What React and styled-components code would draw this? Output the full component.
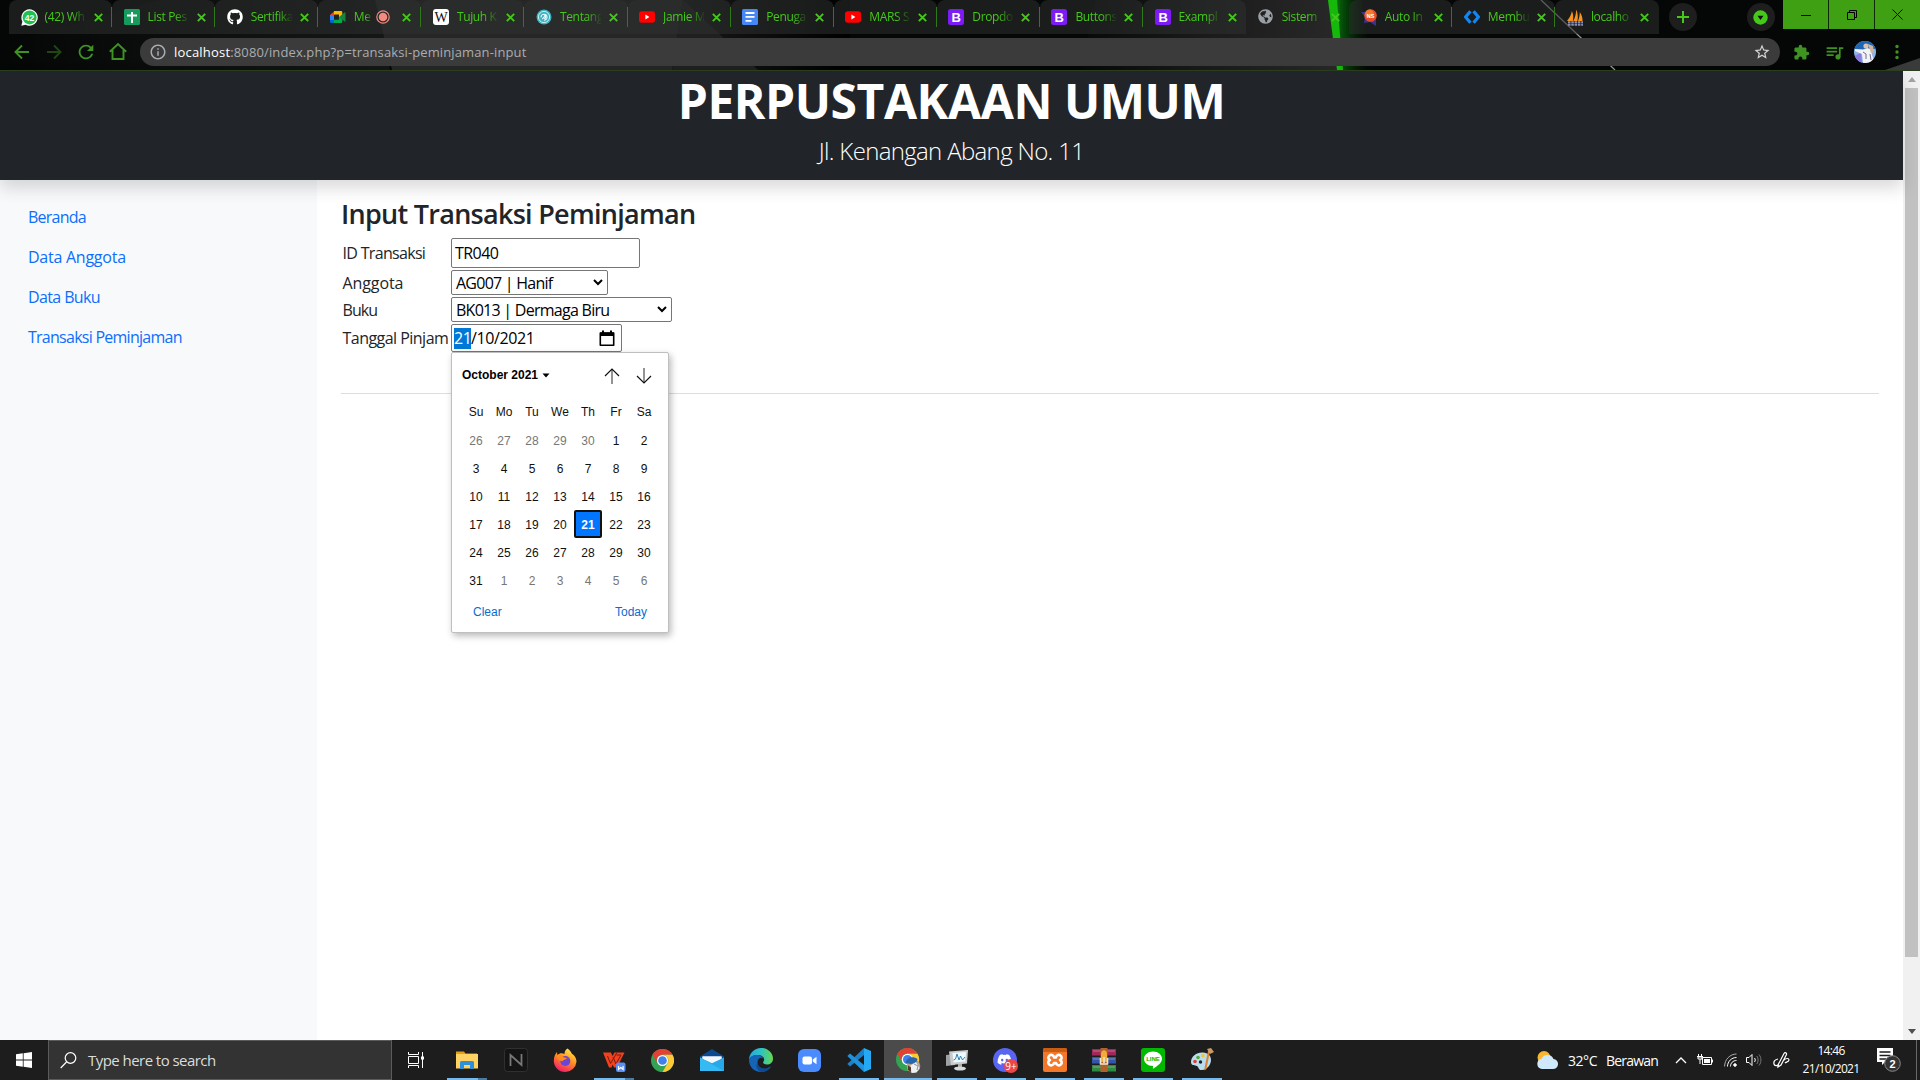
import React from 'react';
import styled, { createGlobalStyle, css } from 'styled-components';
import { FaGithub, FaDiscord, FaGlobeAmericas } from 'react-icons/fa';
import { MdQueueMusic, MdStarBorder, MdInfoOutline, MdRefresh, MdExtension } from 'react-icons/md';

const sans = '"Segoe UI", "Open Sans", "Noto Sans", sans-serif';
const arial = '"Liberation Sans", Arial, sans-serif';
const green = '#45c81a';
const darkGreen = '#3f9322';

const GlobalStyle = createGlobalStyle`
  * { box-sizing: border-box; }
  body { margin: 0; background: #fff; overflow: hidden; }
  svg { display: block; flex: none; }
`;

const Screen = styled.div`
  width: 1920px;
  height: 1080px;
  display: flex;
  flex-direction: column;
  overflow: hidden;
  font-family: ${sans};
`;

/* ---------- Browser frame ---------- */
const Frame = styled.header`
  position: relative;
  height: 71px;
  flex: none;
  display: flex;
  flex-direction: column;
  background: #050606;
  border-bottom: 1px solid #2b401f;
`;
const FrameArt = styled.svg`
  position: absolute;
  inset: 0;
`;
const TabStrip = styled.div`
  position: relative;
  height: 34px;
  display: flex;
  padding-left: 9px;
`;
const Tab = styled.div`
  width: 103.1px;
  height: 34px;
  display: flex;
  align-items: center;
  padding-left: 11.5px;
  border-radius: 8px 8px 0 0;
  background: ${p => (p.$active ? 'transparent' : 'rgba(46, 48, 47, 0.55)')};
`;
const TabIcon = styled.span`
  width: 16px;
  height: 16px;
  margin-right: 8px;
  display: flex;
`;
const TabTitle = styled.span`
  width: 41px;
  white-space: nowrap;
  font-size: 12px;
  line-height: 18px;
  letter-spacing: -0.35px;
  color: ${green};
  mask-image: linear-gradient(90deg, #000 65%, rgba(0, 0, 0, 0.1) 100%);
  ${p => p.$short && css`width: 18px; margin-right: 4px;`}
`;
const RecDot = styled.svg`
  margin-right: 5px;
`;
const TabClose = styled.svg`
  margin-left: ${p => (p.$short ? 7 : 8)}px;
`;
const Divider = styled.span`
  width: 1px;
  height: 20px;
  margin-left: auto;
  background: ${p => (p.$hidden ? 'transparent' : '#2f7a17')};
`;
const RoundButton = styled.span`
  width: 28px;
  height: 28px;
  margin: 3px 0 0 ${p => p.$left}px;
  border-radius: 50%;
  background: #1d1e1d;
  display: flex;
  align-items: center;
  justify-content: center;
`;
const WindowButtons = styled.div`
  margin-left: auto;
  height: 29px;
  display: flex;
  gap: 1px;
  background: #0d2a04;
`;
const WindowButton = styled.span`
  width: 45px;
  display: flex;
  align-items: center;
  justify-content: center;
  background: #40a013;
`;
const Toolbar = styled.div`
  position: relative;
  height: 36px;
  display: flex;
  align-items: center;
  padding-left: 11px;
  color: ${darkGreen};
`;
const NavIcons = styled.div`
  display: flex;
  gap: 10px;
  width: 129px;
`;
const Omnibox = styled.div`
  width: 1640px;
  height: 28px;
  border-radius: 14px;
  background: #3b3b3b;
  display: flex;
  align-items: center;
  padding: 0 9px;
  font-size: 13px;
  letter-spacing: 0.12px;
  color: #a9adb1;
  white-space: nowrap;
`;
const Host = styled.span`
  margin-left: 7px;
  letter-spacing: 0.2px;
  color: #fff;
`;
const OmniEnd = styled.span`
  margin-left: auto;
  color: #d2d5d8;
`;
const Extensions = styled.div`
  display: flex;
  align-items: center;
  padding-left: 13px;
  & > :nth-child(2) { margin-left: 14px; }
  & > :nth-child(3) { margin-left: 9px; }
  & > :nth-child(4) { margin-left: 11px; }
`;

/* ---------- Web page ---------- */
const Viewport = styled.div`
  height: 969px;
  flex: none;
  display: flex;
`;
const Page = styled.div`
  width: 1903px;
  display: flex;
  flex-direction: column;
`;
const Banner = styled.div`
  position: relative;
  z-index: 1;
  height: 109px;
  flex: none;
  padding-top: 1px;
  text-align: center;
  background: #212529;
  color: #fff;
  box-shadow: 0 8px 16px rgba(0, 0, 0, 0.15);
`;
const BannerTitle = styled.h1`
  margin: 0;
  font-size: 48px;
  line-height: 58px;
  font-weight: 700;
  letter-spacing: -0.45px;
`;
const BannerLead = styled.p`
  margin: 3px 0 0;
  font-size: 24px;
  line-height: 36px;
  font-weight: 300;
  letter-spacing: -0.66px;
`;
const Columns = styled.div`
  flex: 1;
  display: flex;
`;
const Sidebar = styled.nav`
  width: 317px;
  flex: none;
  padding: 17px 28px;
  background: #f8f9fa;
  display: flex;
  flex-direction: column;
`;
const SideLink = styled.a`
  padding: 8px 0;
  font-size: 16px;
  line-height: 24px;
  letter-spacing: ${p => p.$ls}px;
  color: #0d6efd;
`;
const Main = styled.main`
  flex: 1;
  padding: 17px 24px 0;
`;
const Heading = styled.h3`
  margin: 0 0 7px;
  font-size: 27px;
  line-height: 34px;
  font-weight: 600;
  letter-spacing: -0.72px;
  color: #212529;
`;
const Form = styled.div`
  display: grid;
  grid-template-columns: 109px 1fr;
  grid-template-rows: 30px 25px 25px 28px;
  row-gap: 2px;
  padding-left: 1px;
  align-items: center;
`;
const Label = styled.label`
  padding-left: 0.5px;
  font-size: 16px;
  letter-spacing: ${p => p.$ls}px;
  white-space: nowrap;
  color: #212529;
`;
const Field = styled.div`
  position: relative;
  width: ${p => p.$w}px;
  height: 100%;
  display: flex;
  align-items: center;
  justify-content: space-between;
  padding: 0 4px 0 ${p => p.$pad || 4}px;
  border: 1px solid #767676;
  border-radius: 2px;
  background: #fff;
  font-size: 16px;
  letter-spacing: ${p => p.$ls || -0.7}px;
  white-space: nowrap;
  color: #000;
`;
const DatePart = styled.span`
  display: inline-block;
  width: 17px;
  height: 21px;
  line-height: 21px;
  background: #0078d7;
  color: #fff;
`;
const DateValue = styled.span`
  line-height: 21px;
  letter-spacing: -0.4px;
`;
const Rule = styled.hr`
  height: 1px;
  margin: 41px 0 0;
  border: 0;
  background: #dcddde;
`;

/* ---------- Date picker ---------- */
const Picker = styled.div`
  position: absolute;
  left: -1px;
  top: 27px;
  z-index: 2;
  width: 218px;
  height: 281px;
  border: 1px solid #bfbfbf;
  border-radius: 2px;
  background: #fff;
  box-shadow: 2px 3px 7px rgba(0, 0, 0, 0.28);
  font-family: ${arial};
  font-size: 12px;
  letter-spacing: 0;
  color: #101010;
`;
const PickerHead = styled.div`
  height: 44px;
  display: flex;
  align-items: center;
  padding: 0 16px 0 10px;
  font-weight: 700;
  color: #000;
  & > svg:nth-of-type(1) { margin-left: 4px; }
  & > svg:nth-of-type(2) { margin: 2px 16px 0 auto; }
  & > svg:nth-of-type(3) { margin-top: 2px; }
`;
const DayGrid = styled.div`
  display: grid;
  grid-template-columns: repeat(7, 28px);
  grid-template-rows: 29px repeat(6, 28px);
  padding-left: 10px;
`;
const Weekday = styled.span`
  display: flex;
  align-items: center;
  justify-content: center;
`;
const Day = styled(Weekday)`
  padding-top: 2px;
  color: ${p => (p.$muted ? '#767676' : '#101010')};
  ${p => p.$selected && css`
    border: 2px solid #101010;
    border-radius: 2px;
    background: #0075ff;
    color: #fff;
    font-weight: 700;
  `}
`;
const PickerFoot = styled.div`
  display: flex;
  justify-content: space-between;
  padding: 11px 21px 0 21px;
  line-height: 15px;
  color: #0b6bd0;
`;

/* ---------- Scrollbar ---------- */
const Scrollbar = styled.div`
  width: 17px;
  display: flex;
  flex-direction: column;
  align-items: center;
  justify-content: space-between;
  background: #f1f1f1;
`;
const ScrollArrow = styled.span`
  height: 17px;
  display: flex;
  align-items: center;
`;
const Thumb = styled.span`
  width: 13px;
  height: 869px;
  margin-bottom: auto;
  background: #c1c1c1;
`;

/* ---------- Taskbar ---------- */
const Taskbar = styled.footer`
  height: 40px;
  flex: none;
  display: flex;
  background: #1d1d1d;
  color: #fff;
`;
const StartButton = styled.span`
  width: 48px;
  display: flex;
  align-items: center;
  justify-content: center;
`;
const SearchBox = styled.div`
  width: 344px;
  border: 1px solid #5b5b5b;
  background: #333;
  display: flex;
  align-items: center;
  padding-left: 11px;
  gap: 11px;
  font-size: 15px;
  letter-spacing: -0.55px;
  color: #dcdcdc;
`;
const TaskView = styled.span`
  width: 50px;
  padding-right: 2px;
  display: flex;
  align-items: center;
  justify-content: center;
`;
const AppButton = styled.span`
  position: relative;
  width: 49px;
  height: 40px;
  display: flex;
  align-items: center;
  justify-content: center;
  background: linear-gradient(90deg, transparent 1px, ${p => (p.$active ? '#4b4b4b' : 'transparent')} 1px);
  &::after {
    content: '';
    position: absolute;
    bottom: 0;
    left: ${p => (p.$active ? 1 : 5)}px;
    right: ${p => (p.$active ? 0 : 4)}px;
    height: 2px;
    background: ${p => (p.$running
      ? p.$stacked ? 'linear-gradient(90deg, #76b9ed 31px, #4a7ba1 31px)' : '#76b9ed'
      : 'transparent')};
  }
`;
const Tray = styled.div`
  margin-left: auto;
  width: 384px;
  display: flex;
  align-items: center;
  white-space: nowrap;
  font-size: 14px;
`;
const TrayText = styled.span`
  margin-left: ${p => p.$left}px;
  width: ${p => p.$w}px;
  letter-spacing: ${p => p.$ls}px;
`;
const TrayIcon = styled.span`
  margin-left: ${p => p.$left}px;
`;
const Clock = styled.div`
  margin-left: 11px;
  width: 60px;
  text-align: center;
  font-size: 12px;
  line-height: 18px;
  letter-spacing: -0.67px;
`;
const ShowDesktop = styled.span`
  width: 4px;
  height: 40px;
  margin-left: auto;
  border-left: 1px solid #6a6a6a;
`;

/* ---------- Icons ---------- */
const SvgText = styled.text`
  font-family: ${arial};
  font-weight: 700;
  text-anchor: middle;
`;
const WhatsApp = () => (
  <svg width="17" height="17" viewBox="0 0 17 17">
    <path d="M8.5.3a8.2 8.2 0 1 1-3.9 15.4L.3 16.7l1.1-4.2A8.2 8.2 0 0 1 8.5.3z" fill="#fff" />
    <circle cx="8.6" cy="8.4" r="7" fill="#1fc24f" />
    <SvgText x="8.5" y="11.5" fontSize="8.5" fill="#fff">42</SvgText>
  </svg>
);
const Sheets = () => (
  <svg width="16" height="16"><rect width="16" height="16" rx="1.5" fill="#159b5c" /><path d="M8 3v11M3 6.5h10" stroke="#fff" strokeWidth="2" /></svg>
);
const Meet = () => (
  <svg width="16" height="16" viewBox="0 0 16 16">
    <path d="M0 6l4.5-4v4z" fill="#ea4335" /><path d="M0 6h4v5H0z" fill="#2684fc" /><path d="M0 11h4v3H1.2A1.2 1.2 0 0 1 0 12.8z" fill="#0066da" />
    <path d="M4 2h7a1.3 1.3 0 0 1 1.3 1.3V8L9 8V5.5H4z" fill="#ffba00" /><path d="M4 10.8h5V8l3.3.2v4.5A1.3 1.3 0 0 1 11 14H4z" fill="#00ac47" />
    <path d="M9 8l5.5-4.6c.5-.4 1-.2 1 .4v8.5c0 .6-.5.7-1 .3z" fill="#16843b" />
  </svg>
);
const Wiki = () => (
  <svg width="16" height="16"><rect width="16" height="16" rx="3" fill="#fff" /><text x="8" y="13" fontSize="14" textAnchor="middle" fontFamily="Liberation Serif, serif" fill="#111">W</text></svg>
);
const Tentang = () => (
  <svg width="16" height="16"><circle cx="8" cy="8" r="7.5" fill="#3fb2c2" /><circle cx="8" cy="8" r="5.6" fill="none" stroke="#c6eef2" /><path d="M5 8.3a3 3 0 1 1 3 3M6.2 10.2l4-4.4M8 6.6a1.6 1.6 0 0 1 0 3.2" fill="none" stroke="#e8fbfd" strokeWidth="1.1" /></svg>
);
const Youtube = () => (
  <svg width="16" height="16"><rect y="2.2" width="16" height="11.6" rx="2.8" fill="#f00" /><path d="M6.4 5.6v4.8l4-2.4z" fill="#fff" /></svg>
);
const Docs = () => (
  <svg width="16" height="16"><rect width="16" height="16" rx="1.5" fill="#4587f4" /><path d="M3.5 4h9M3.5 7.8h9M3.5 11.8h6" stroke="#fff" strokeWidth="1.8" /></svg>
);
const Bootstrap = () => (
  <svg width="16" height="16"><rect width="16" height="16" rx="2.5" fill="#7d1bf5" /><SvgText x="8.1" y="12.6" fontSize="13" fill="#fff">B</SvgText></svg>
);
const AutoIn = () => (
  <svg width="17" height="17" viewBox="0 0 17 17"><path d="M0 3l5 0 9 1 1 6 0 7-6-4-6 1 1-6z" fill="#39358c" /><circle cx="9.5" cy="6.5" r="6.3" fill="#ef4a2b" /><circle cx="8.5" cy="4.8" r="4.3" fill="#fb8a2c" opacity=".75" /><SvgText x="9.5" y="8.500" fontSize="5.5" fill="#fff">NS</SvgText></svg>
);
const Membu = () => (
  <svg width="16" height="16" viewBox="0 0 16 16"><path d="M6.4 2.2L1.6 8l4.8 5.8M9.6 2.2L14.4 8l-4.8 5.8" fill="none" stroke="#1187f5" strokeWidth="3.2" strokeLinejoin="round" /></svg>
);
const PhpMyAdmin = () => (
  <svg width="17" height="17" viewBox="0 0 17 17"><path d="M0 12C3 8 4.500 5 4.800 2c1.600 3 1.800 6 1 10zM6.200 12c2-3 2.800-7 3-11.500 1.800 4 2 8 1.200 11.500zM11 12c1.300-3 1.700-6 1.800-9 2 3 3 6 2.700 9z" fill="#f6921e" /><path d="M1 13.200h15M1 15.800h15" stroke="#8c8fb5" strokeWidth="2" strokeDasharray="2.500 .8" /></svg>
);
const iconFor = {
  wa: <WhatsApp />, sheets: <Sheets />, github: <FaGithub size={16} color="#fff" />, meet: <Meet />, wiki: <Wiki />,
  tentang: <Tentang />, yt: <Youtube />, docs: <Docs />, bs: <Bootstrap />, globe: <FaGlobeAmericas size={15} color="#9aa0a6" />,
  auto: <AutoIn />, membu: <Membu />, pma: <PhpMyAdmin />,
};

const ChromeLogo = () => (
  <svg width="23" height="23" viewBox="0 0 24 24">
    <circle cx="12" cy="12" r="12" fill="#33a352" />
    <path d="M1.600 6A12 12 0 0 1 22.400 6H12a6 6 0 0 0-5.200 9z" fill="#e34133" />
    <path d="M22.400 6A12 12 0 0 1 12 24l5.200-9A6 6 0 0 0 12 6z" fill="#fdc934" />
    <circle cx="12" cy="12" r="5.800" fill="#fff" /><circle cx="12" cy="12" r="4.500" fill="#3f7fee" />
  </svg>
);
const ChromeProfile = () => (
  <svg width="26" height="26" viewBox="-1 -1 26 26">
    <circle cx="11.500" cy="11.500" r="11.500" fill="#33a352" />
    <path d="M1.500 5.700A11.500 11.500 0 0 1 21.500 5.700H11.500a6 6 0 0 0-5.200 9z" fill="#e34133" />
    <path d="M21.500 5.700A11.500 11.500 0 0 1 11.500 23l5.200-9A6 6 0 0 0 11.500 5.700z" fill="#fdc934" />
    <circle cx="11.500" cy="11.500" r="5.800" fill="#fff" /><circle cx="11.500" cy="11.500" r="4.500" fill="#3f7fee" />
    <circle cx="17.500" cy="18" r="6.800" fill="#b5a187" /><path d="M9.500 15c1-6 8-7 12-4l-1.500 4-5 1z" fill="#2765ad" />
    <path d="M14.500 17.500l5.500-3.500 3.500 6-3 4.500-5 .5z" fill="#eef1f4" /><path d="M12 17.500l3 2v4.500l-3-2z" fill="#4b3b36" /><path d="M18 16l4 2-1 4" fill="none" stroke="#8c8f9c" />
  </svg>
);
const Explorer = () => (
  <svg width="24" height="24" viewBox="0 0 24 24"><path d="M1 3.500h8l1.500 2H22V20H1z" fill="#e5a014" /><path d="M1 6h22v14.500H1z" fill="#ffd363" /><path d="M5 21v-6.500A1.500 1.500 0 0 1 6.500 13h11a1.500 1.500 0 0 1 1.500 1.500V21h-4v-4H9v4z" fill="#2f8fd9" /></svg>
);
const NIcon = () => (
  <svg width="24" height="24" viewBox="0 0 24 24"><rect x=".5" y=".5" width="23" height="23" rx="3" fill="#141414" stroke="#303030" /><path d="M6.500 18V7l11 10V6" fill="none" stroke="#777" strokeWidth="1.800" /></svg>
);
const Firefox = () => (
  <svg width="24" height="24" viewBox="0 0 24 24">
    <defs><linearGradient id="ff" x1=".8" y1="0" x2=".3" y2="1"><stop offset="0" stopColor="#fff14a" /><stop offset=".45" stopColor="#ff9322" /><stop offset="1" stopColor="#f2196a" /></linearGradient></defs>
    <path d="M14.500.5c3 2 3.800 4 4.500 5.500 2 .5 4.500 4 4.500 7.500A11.300 11.300 0 0 1 12 24 11.300 11.300 0 0 1 .8 12.700C.8 8.500 2.500 6 4 4l.3 3C7 4.500 9.500 5 11.500 6c0-2.500 1-4.500 3-5.500z" fill="url(#ff)" />
    <circle cx="12.300" cy="13" r="5" fill="#6b45d6" /><path d="M3 8c3-2.500 6-1 8 1.500l3 .5c-1 2-4 1.500-4.500 3.500-3-.5-5-2.500-6.500-5.500z" fill="#ff8a1d" />
  </svg>
);
const Wps = () => (
  <svg width="24" height="24" viewBox="0 0 24 24"><path d="M1 4.500H9L10.500 8 12.500 4.500H22.500L15 19.500H12L10.500 16.500 9.500 19.500H7z" fill="#f1411f" /><path d="M5.500 8l3 7.500 6.500-11M11 9l3 7 5-9h-4.500" fill="none" stroke="#7c1a0d" strokeWidth="1" /><rect x="14" y="14.500" width="9.500" height="9.500" rx="2" fill="#5a8ff5" /><path d="M16.500 18v3.500l2.300-2 2.300 2V18" fill="none" stroke="#fff" strokeWidth="1.200" /></svg>
);
const Mail = () => (
  <svg width="24" height="24" viewBox="0 0 24 24"><path d="M0 8.500L12 1l12 7.500V11H0z" fill="#0b4a8f" /><path d="M2.500 8.500h19V11L12 17 2.500 11z" fill="#f5f8fb" /><path d="M0 9.500l12 5.500L24 9.500V23H0z" fill="#26a9ea" /><path d="M0 9.500L24 23H0z" fill="#3cc2f6" opacity=".7" /><path d="M2.500 8.500h19v2.100L12 15l-9.500-4.400z" fill="#f5f8fb" /></svg>
);
const Edge = () => (
  <svg width="24" height="24" viewBox="0 0 24 24">
    <defs><linearGradient id="eg"><stop offset="0" stopColor="#27a8e0" /><stop offset=".5" stopColor="#2fc2c4" /><stop offset="1" stopColor="#66d84f" /></linearGradient></defs>
    <path d="M0 12C0 5 5.500 0 12 0c7 0 12 5 12 10.500 0 4-3 6-6 6-3.500 0-4.500-1.500-3.500-3 2-3-1-6.500-5.500-6.500S1 9 0 12z" fill="url(#eg)" />
    <path d="M0 12c1-4 5-5.500 9-5 3 .4 5 2 5.500 4-2-2.500-6-1-6 3.500 0 4 4 7 9 6 1.700-.4 3-1.300 4.500-2C20 22 16 24 12 24 5 24 0 18.500 0 12z" fill="#1564b8" />
    <path d="M8.500 14.500c0 4 4 7 9 6 1.700-.4 3-1.300 4.500-2C19.500 22 16 24 12.500 24 8 22.500 6 18 8.500 14.500z" fill="#0d4a94" />
  </svg>
);
const Zoom = () => (
  <svg width="23" height="23" viewBox="0 0 23 23"><rect width="23" height="23" rx="6" fill="#4a8cff" /><rect x="4.500" y="7.500" width="9.500" height="8" rx="2" fill="#fff" /><path d="M14.800 10.500l3.700-2.700v7.400l-3.700-2.700z" fill="#fff" /></svg>
);
const VsCode = () => (
  <svg width="24" height="24" viewBox="0 0 24 24"><path d="M17 0v7L3 18.500 .3 16z" fill="#1b80c9" /><path d="M17 24v-7L3 5.500 .3 8z" fill="#2092dc" /><path d="M17 0l7 3v18l-7 3z" fill="#24a9f2" /></svg>
);
const TaskMon = () => (
  <svg width="24" height="24" viewBox="0 0 24 24"><path d="M1 7l9-1v11l-9 1z" fill="#9da1a3" /><path d="M4 3.500L23 2l-1 13.500L6 17z" fill="#c9cccd" /><path d="M7.500 5l13.500-1-.8 9.500L8.500 14.500z" fill="#eef8fd" /><path d="M8.500 12l2-1 1.500-5 2 6 1.500-4 2 4 2.500-3" fill="none" stroke="#2987bd" /><path d="M13 16h4v4h-4z" fill="#aaaeb0" /><ellipse cx="15" cy="20.500" rx="6" ry="2" fill="#d6d9da" /></svg>
);
const Discord = () => (
  <svg width="25" height="25" viewBox="0 0 25 25"><circle cx="12" cy="12" r="12" fill="#5865f2" /><FaDiscord x="4" y="4" size={15} color="#fff" /><circle cx="18" cy="18" r="7" fill="#ee4548" /><text x="18" y="21.600" fontSize="10" textAnchor="middle" fontFamily="Open Sans, sans-serif" fill="#fff">9+</text></svg>
);
const Xampp = () => (
  <svg width="24" height="24" viewBox="0 0 24 24"><rect width="24" height="24" rx="2" fill="#f3782a" /><path d="M0 2a2 2 0 0 1 2-2h20a2 2 0 0 1 2 2v2H0z" fill="#ca5c14" /><path d="M6 8a2.800 2.800 0 0 1 5 1.500h2A2.800 2.800 0 0 1 18 8c1.500 2 .2 3.500-1 4 1.500.8 2.500 2.500 1 4.300A2.800 2.800 0 0 1 13 15h-2a2.800 2.800 0 0 1-5 1.300C4.500 14.500 5.500 12.800 7 12 5.800 11.500 4.500 10 6 8z" fill="none" stroke="#fff" strokeWidth="2.600" strokeLinejoin="round" /></svg>
);
const WinRar = () => (
  <svg width="24" height="24" viewBox="0 0 24 24"><rect y="1" width="24" height="6.500" fill="#a3285a" /><rect y="9" width="24" height="6.500" fill="#3556a8" /><rect y="17" width="24" height="6.500" fill="#2f8a42" /><path d="M1 3h22M1 11h22M1 19h22" stroke="#fff" opacity=".35" /><rect x="8.500" width="7" height="24" fill="#b4602a" /><path d="M9 6c0-5 6-5 6 0v8H9z" fill="#efad3c" /><path d="M8.500 10v6h7v-6M12 9v6" fill="none" stroke="#efe6d2" strokeWidth="1.600" /></svg>
);
const Line = () => (
  <svg width="24" height="24" viewBox="0 0 24 24"><rect width="24" height="24" rx="3" fill="#00b900" /><path d="M12 3.500c5 0 9 3.200 9 7.300 0 4-4.500 7.200-8.500 9.700-.7.400-.8 0-.6-1l.2-1.400C6.500 18 3 14.800 3 10.800c0-4 4-7.300 9-7.300z" fill="#fff" /><SvgText x="12" y="13.300" fontSize="6" fill="#00b900">LINE</SvgText></svg>
);
const Paint = () => (
  <svg width="24" height="24" viewBox="0 0 24 24"><path d="M1 14C1 8 7 4 13 4.500c5 .5 8 3 8 7.500 0 5-4 9.500-9 10-4 .4-3-3-5-4s-6 0-6-4z" fill="#b9dcf0" /><circle cx="5" cy="13.500" r="1.800" fill="#df3e30" /><circle cx="8" cy="9.500" r="1.800" fill="#52ab36" /><circle cx="13" cy="7.800" r="1.800" fill="#f4c529" /><circle cx="10.500" cy="14" r="1.700" fill="#17222b" /><path d="M20 3l-3.500 18-2 1.500V20L18 3z" fill="#d98532" /><path d="M17 1l4-1 3 4-4 2z" fill="#c99b68" /></svg>
);

const CloseX = ({ short }) => (
  <TabClose $short={short} width="9" height="9" viewBox="0 0 9 9"><path d="M.8.8l7.400 7.400M8.200.8L.8 8.200" stroke={green} strokeWidth="1.900" /></TabClose>
);
const Arrow = ({ dim, flip }) => (
  <svg width="22" height="22" viewBox="0 0 22 22" opacity={dim ? 0.45 : 1}>
    <path transform={flip ? 'translate(22 0) scale(-1 1)' : undefined} d="M18 11H5M11 4.500L4.500 11l6.500 6.500" fill="none" stroke={darkGreen} strokeWidth="1.900" />
  </svg>
);

const tabs = [
  ['wa', '(42) Wh'], ['sheets', 'List Pes'], ['github', 'Sertifika'], ['meet', 'Me'], ['wiki', 'Tujuh K'],
  ['tentang', 'Tentang'], ['yt', 'Jamie M'], ['docs', 'Penuga'], ['yt', 'MARS S'], ['bs', 'Dropdo'],
  ['bs', 'Buttons'], ['bs', 'Exampl'], ['globe', 'Sistem'], ['auto', 'Auto In'], ['membu', 'Membu'], ['pma', 'localho'],
];

function BrowserFrame() {
  return (
    <Frame>
      <FrameArt width="1920" height="70" viewBox="0 0 1920 70">
        <defs>
          <linearGradient id="left"><stop offset="0" stopColor="#050606" /><stop offset="1" stopColor="#151616" /></linearGradient>
          <linearGradient id="mid"><stop offset="0" stopColor="#191919" /><stop offset="1" stopColor="#000" /></linearGradient>
          <linearGradient id="act"><stop offset="0" stopColor="#070808" /><stop offset=".5" stopColor="#1b1b1b" /><stop offset="1" stopColor="#282828" /></linearGradient>
          <linearGradient id="glow"><stop offset="0" stopColor="#06780a" /><stop offset="1" stopColor="#021503" stopOpacity="0" /></linearGradient>
        </defs>
        <path d="M0 45L160 0H380L390 70H0z" fill="url(#left)" />
        <path d="M375 0H683L672 70H392z" fill="#262626" />
        <path d="M683 0H850V70H672z" fill="url(#mid)" />
        <path d="M683 0L758 70H672z" fill="#202020" />
        <path d="M1096 0H1340V70H1080z" fill="url(#act)" />
        <path d="M1334 0H1362L1372 70H1342z" fill="url(#glow)" />
        <path d="M1328 0h9l6 70h-6z" fill="#16b80c" />
        <path d="M1541 0L1615 70" stroke="#9a9a9a" strokeWidth="1.200" />
        <path d="M1885 70L1920 58V70z" fill="#3a3a3a" />
      </FrameArt>
      <TabStrip>
        {tabs.map(([icon, title], i) => (
          <Tab key={i} $active={icon === 'globe'}>
            <TabIcon>{iconFor[icon]}</TabIcon>
            <TabTitle $short={icon === 'meet'}>{title}</TabTitle>
            {icon === 'meet' && (
              <RecDot width="14" height="14" viewBox="0 0 14 14"><circle cx="7" cy="7" r="6.200" fill="none" stroke="#f28b82" strokeWidth="1.200" /><circle cx="7" cy="7" r="4.300" fill="#f28b82" /></RecDot>
            )}
            <CloseX short={icon === 'meet'} />
            <Divider $hidden={i === 11 || i === 12 || i === 15} />
          </Tab>
        ))}
        <RoundButton $left={10.4}><svg width="12" height="12"><path d="M6 0v12M0 6h12" stroke={green} strokeWidth="2" /></svg></RoundButton>
        <RoundButton $left={50}><svg width="15" height="15"><circle cx="7.500" cy="7.500" r="7.200" fill={green} /><path d="M4.500 5.800h6L7.500 10z" fill="#111" /></svg></RoundButton>
        <WindowButtons>
          <WindowButton><svg width="10" height="10"><path d="M0 5.500h10" stroke="#000" /></svg></WindowButton>
          <WindowButton><svg width="10" height="10"><path d="M.5 2.500h7v7h-7zM2.500 2.500v-2h7v7h-2" fill="none" stroke="#000" /></svg></WindowButton>
          <WindowButton><svg width="11" height="11"><path d="M.5.5l10 10M10.500.5l-10 10" stroke="#000" /></svg></WindowButton>
        </WindowButtons>
      </TabStrip>
      <Toolbar>
        <NavIcons>
          <Arrow />
          <Arrow dim flip />
          <MdRefresh size={22} />
          <svg width="22" height="22" viewBox="0 0 22 22"><path d="M2.800 10.800L11 3l8.200 7.800M5.500 9v9h11V9" fill="none" stroke={darkGreen} strokeWidth="1.900" /></svg>
        </NavIcons>
        <Omnibox>
          <MdInfoOutline size={18} />
          <Host>localhost</Host>:8080/index.php?p=transaksi-peminjaman-input
          <OmniEnd><MdStarBorder size={18} /></OmniEnd>
        </Omnibox>
        <Extensions>
          <MdExtension size={17} />
          <MdQueueMusic size={21} />
          <svg width="22" height="22" viewBox="0 0 22 22">
            <defs><clipPath id="av"><circle cx="11" cy="11" r="11" /></clipPath></defs>
            <g clipPath="url(#av)">
              <rect width="22" height="22" fill="#8fb4e8" /><path d="M0 0h22v8H0z" fill="#1e66b4" /><path d="M0 15l7-3 1 10H0z" fill="#8a7be0" />
              <path d="M1 8l8 1 4-2 4 1 1 6 3 8H9l-1-9-7-3z" fill="#f3f2f5" /><circle cx="12" cy="5" r="2.600" fill="#d9c2ae" /><path d="M14 3l5 2 1 6-3 1z" fill="#d6b49c" />
              <path d="M9 11l3 2v5M16 13l1 6" fill="none" stroke="#6c6f92" />
            </g>
          </svg>
          <svg width="20" height="20" fill={darkGreen}><circle cx="10" cy="4.500" r="1.700" /><circle cx="10" cy="10" r="1.700" /><circle cx="10" cy="15.500" r="1.700" /></svg>
        </Extensions>
      </Toolbar>
    </Frame>
  );
}

const weekdays = ['Su', 'Mo', 'Tu', 'We', 'Th', 'Fr', 'Sa'];
const days = [26, 27, 28, 29, 30, ...Array.from({ length: 31 }, (_, i) => i + 1), 1, 2, 3, 4, 5, 6];

function DatePicker() {
  return (
    <Picker>
      <PickerHead>
        October 2021
        <svg width="8" height="5"><path d="M.5.5h7L4 4.500z" fill="#000" /></svg>
        <svg width="16" height="16"><path d="M8 16V1" stroke="#707070" strokeWidth="1.500" /><path d="M1 8l7-7 7 7" fill="none" stroke="#111" strokeWidth="1.200" /></svg>
        <svg width="16" height="16"><path d="M8 0v15" stroke="#707070" strokeWidth="1.500" /><path d="M1 8l7 7 7-7" fill="none" stroke="#111" strokeWidth="1.200" /></svg>
      </PickerHead>
      <DayGrid>
        {weekdays.map(d => <Weekday key={d}>{d}</Weekday>)}
        {days.map((d, i) => <Day key={i} $muted={i < 5 || i > 35} $selected={i === 25}>{d}</Day>)}
      </DayGrid>
      <PickerFoot><span>Clear</span><span>Today</span></PickerFoot>
    </Picker>
  );
}

const Chevron = () => (
  <svg width="10" height="7"><path d="M1 1l4 4 4-4" fill="none" stroke="#000" strokeWidth="2" /></svg>
);

const apps = [
  [<Explorer />, 'stacked'], [<NIcon />], [<Firefox />], [<Wps />, 'stacked'], [<ChromeLogo />], [<Mail />], [<Edge />], [<Zoom />],
  [<VsCode />, 'running'], [<ChromeProfile />, 'active'], [<TaskMon />, 'running'], [<Discord />, 'running'], [<Xampp />, 'running'],
  [<WinRar />, 'running'], [<Line />, 'running'], [<Paint />, 'running'],
];

function WindowsTaskbar() {
  return (
    <Taskbar>
      <StartButton><svg width="16" height="16"><path d="M0 2.300L6.800 1.300V7.600H0zM7.600 1.200L16 0V7.600H7.600zM0 8.400H6.800V14.700L0 13.700zM7.600 8.400H16V16L7.600 14.800z" fill="#fff" /></svg></StartButton>
      <SearchBox>
        <svg width="17" height="17"><circle cx="10.500" cy="6" r="5.300" fill="none" stroke="#fff" strokeWidth="1.200" /><path d="M6.500 10L.7 16" stroke="#fff" strokeWidth="1.200" /></svg>
        Type here to search
      </SearchBox>
      <TaskView>
        <svg width="17" height="16" viewBox="0 0 17 16" fill="none" stroke="#fff"><path d="M.5 0v2.500h10V0M.5 16v-2.500h10V16M.5 4.500h10v7H.5zM14.500 0v16" /><path d="M13 4.500h3v3h-3z" fill="#fff" stroke="none" /></svg>
      </TaskView>
      {apps.map(([icon, state], i) => (
        <AppButton key={i} $running={!!state} $stacked={state === 'stacked'} $active={state === 'active'}>{icon}</AppButton>
      ))}
      <Tray>
        <svg width="22" height="20" viewBox="0 0 22 20"><circle cx="8" cy="7.500" r="6.500" fill="#f7b731" /><path d="M6 19a5 5 0 0 1-.6-9.900A6.500 6.500 0 0 1 17.500 9 5 5 0 0 1 16.500 19z" fill="#cfe8fb" /></svg>
        <TrayText $left={10} $w={38} $ls={-0.45}>32°C</TrayText>
        <TrayText $left={0} $w={53} $ls={-0.8}>Berawan</TrayText>
        <TrayIcon $left={16}><svg width="12" height="8"><path d="M1 7l5-5 5 5" fill="none" stroke="#fff" strokeWidth="1.300" /></svg></TrayIcon>
        <TrayIcon $left={10}><svg width="17" height="12"><path d="M5.500 3.500h9v7h-9zM15.500 5.500v3" fill="none" stroke="#fff" /><path d="M7 5h6v4H7z" fill="#fff" /><path d="M1.500 0v2M4.500 0v2M0 2.500h6M1 3h4v2H1zM3 5v5" fill="none" stroke="#fff" /></svg></TrayIcon>
        <TrayIcon $left={10}><svg width="13" height="14" fill="none" stroke="#fff"><path d="M.6 13.500C.6 6.500 6 1 12.500 1" stroke="#aaa" /><path d="M3.500 13.500c0-5 4-9 9-9M6.500 13.500c0-3.500 2.500-6 6-6" /><circle cx="11" cy="12" r="1.300" fill="#fff" /></svg></TrayIcon>
        <TrayIcon $left={9}><svg width="16" height="14" fill="none" stroke="#fff"><path d="M.5 4.500h2.500l3-3v11l-3-3H.5zM8.500 5c1 1.300 1 2.700 0 4" /><path d="M10.800 3c1.800 2.500 1.800 5.500 0 8M13 1.500c2.600 3.500 2.600 7.500 0 11" stroke="#777" /></svg></TrayIcon>
        <TrayIcon $left={11}><svg width="17" height="18" fill="none" stroke="#fff" strokeWidth="1.200"><path d="M5.500 13L11 2.500c1-1.500 3-.5 2.500 1L8 14l-3 2zM5 8C1 9 .5 11 1 13s3 2 4.500.5M11 9c2-2 5-2 5 0s-3 2-4 3" /></svg></TrayIcon>
        <Clock><div>14:46</div><div>21/10/2021</div></Clock>
        <TrayIcon $left={16}>
          <svg width="25" height="26" viewBox="0 0 25 26"><path d="M0 1h16v14H8l-3 3v-3H0z" fill="#fff" /><path d="M2.500 5h11M2.500 8.500h11M2.500 12h7" stroke="#1d1d1d" strokeWidth="1.300" /><circle cx="15.500" cy="16.500" r="7.800" fill="#333" stroke="#8a8a8a" /><SvgText x="15.500" y="20.500" fontSize="11" fill="#fff">2</SvgText></svg>
        </TrayIcon>
        <ShowDesktop />
      </Tray>
    </Taskbar>
  );
}

export default function App() {
  return (
    <Screen>
      <GlobalStyle />
      <BrowserFrame />
      <Viewport>
        <Page>
          <Banner>
            <BannerTitle>PERPUSTAKAAN UMUM</BannerTitle>
            <BannerLead>Jl. Kenangan Abang No. 11</BannerLead>
          </Banner>
          <Columns>
            <Sidebar>
              <SideLink $ls={-0.75}>Beranda</SideLink>
              <SideLink $ls={-0.25}>Data Anggota</SideLink>
              <SideLink $ls={-0.62}>Data Buku</SideLink>
              <SideLink $ls={-0.74}>Transaksi Peminjaman</SideLink>
            </Sidebar>
            <Main>
              <Heading>Input Transaksi Peminjaman</Heading>
              <Form>
                <Label $ls={-0.68}>ID Transaksi</Label>
                <Field $w={189} $pad={3} $ls={-0.55}>TR040</Field>
                <Label $ls={-0.1}>Anggota</Label>
                <Field $w={157} $ls={-0.75}>AG007 | Hanif<Chevron /></Field>
                <Label $ls={-0.9}>Buku</Label>
                <Field $w={221} $ls={-0.73}>BK013 | Dermaga Biru<Chevron /></Field>
                <Label $ls={-0.53}>Tanggal Pinjam</Label>
                <Field $w={171} $pad={2}>
                  <DateValue><DatePart>21</DatePart>/10/2021</DateValue>
                  <svg width="18" height="17"><path d="M1.300 3h13.400v12.200H1.300z" fill="none" stroke="#000" strokeWidth="1.600" strokeLinejoin="round" /><path d="M1 2.500h14V6H1zM3 .5h2v3H3zM11 .5h2v3h-2z" fill="#000" /></svg>
                  <DatePicker />
                </Field>
              </Form>
              <Rule />
            </Main>
          </Columns>
        </Page>
        <Scrollbar>
          <ScrollArrow><svg width="8" height="5"><path d="M0 5L4 0l4 5z" fill="#a3a3a3" /></svg></ScrollArrow>
          <Thumb />
          <ScrollArrow><svg width="8" height="5"><path d="M0 0h8L4 5z" fill="#505050" /></svg></ScrollArrow>
        </Scrollbar>
      </Viewport>
      <WindowsTaskbar />
    </Screen>
  );
}
